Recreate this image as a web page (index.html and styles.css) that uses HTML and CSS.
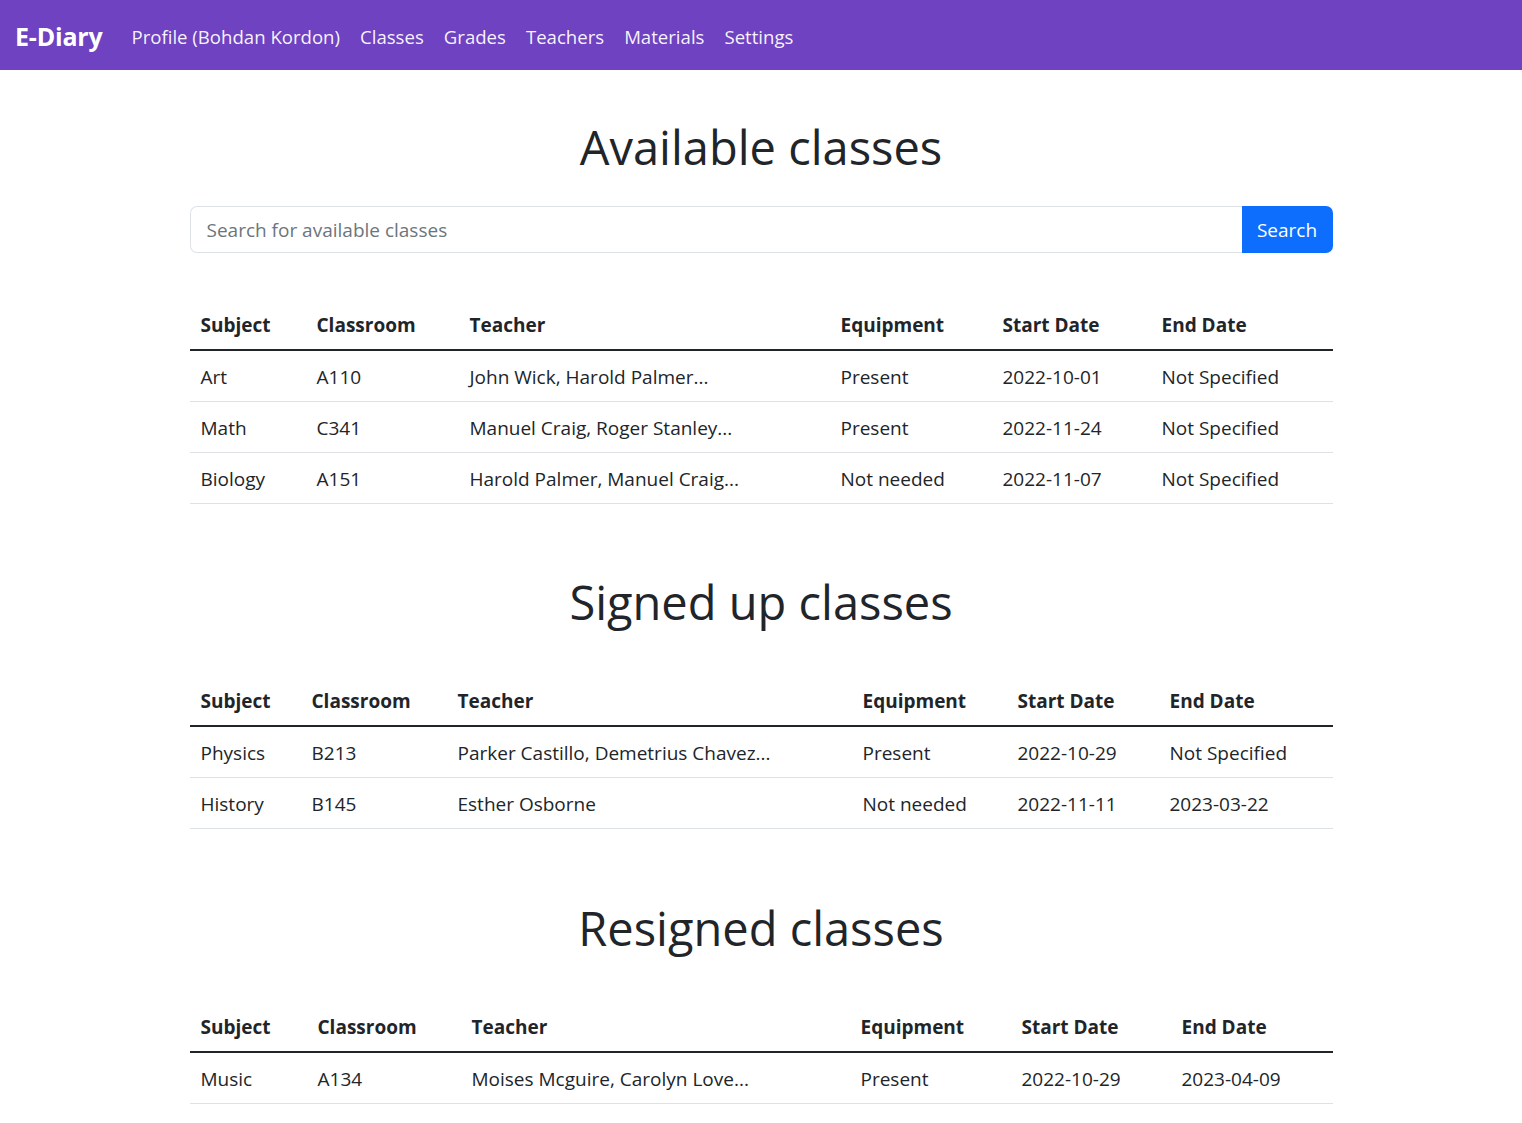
FILE: index.html
```html
<!DOCTYPE html>
<html lang="en">
<head>
<meta charset="utf-8">
<title>E-Diary</title>
<link rel="stylesheet" href="styles.css">
</head>
<body>
<nav class="navbar">
  <a class="brand" href="#">E-Diary</a>
  <ul class="nav">
    <li><a href="#">Profile (Bohdan Kordon)</a></li>
    <li><a href="#">Classes</a></li>
    <li><a href="#">Grades</a></li>
    <li><a href="#">Teachers</a></li>
    <li><a href="#">Materials</a></li>
    <li><a href="#">Settings</a></li>
  </ul>
</nav>
<main class="container">
  <h1 class="title first">Available classes</h1>
  <form class="search">
    <input class="search-input" type="text" placeholder="Search for available classes">
    <button class="search-btn" type="button">Search</button>
  </form>
  <table class="table t1">
    <colgroup><col class="c1"><col class="c2"><col class="c3"><col class="c4"><col class="c5"><col class="c6"></colgroup>
    <thead><tr><th>Subject</th><th>Classroom</th><th>Teacher</th><th>Equipment</th><th>Start Date</th><th>End Date</th></tr></thead>
    <tbody>
      <tr><td>Art</td><td>A110</td><td>John Wick, Harold Palmer...</td><td>Present</td><td>2022-10-01</td><td>Not Specified</td></tr>
      <tr><td>Math</td><td>C341</td><td>Manuel Craig, Roger Stanley...</td><td>Present</td><td>2022-11-24</td><td>Not Specified</td></tr>
      <tr><td>Biology</td><td>A151</td><td>Harold Palmer, Manuel Craig...</td><td>Not needed</td><td>2022-11-07</td><td>Not Specified</td></tr>
    </tbody>
  </table>

  <h1 class="title second">Signed up classes</h1>
  <table class="table t2">
    <colgroup><col class="c1"><col class="c2"><col class="c3"><col class="c4"><col class="c5"><col class="c6"></colgroup>
    <thead><tr><th>Subject</th><th>Classroom</th><th>Teacher</th><th>Equipment</th><th>Start Date</th><th>End Date</th></tr></thead>
    <tbody>
      <tr><td>Physics</td><td>B213</td><td>Parker Castillo, Demetrius Chavez...</td><td>Present</td><td>2022-10-29</td><td>Not Specified</td></tr>
      <tr><td>History</td><td>B145</td><td>Esther Osborne</td><td>Not needed</td><td>2022-11-11</td><td>2023-03-22</td></tr>
    </tbody>
  </table>

  <h1 class="title">Resigned classes</h1>
  <table class="table t3">
    <colgroup><col class="c1"><col class="c2"><col class="c3"><col class="c4"><col class="c5"><col class="c6"></colgroup>
    <thead><tr><th>Subject</th><th>Classroom</th><th>Teacher</th><th>Equipment</th><th>Start Date</th><th>End Date</th></tr></thead>
    <tbody>
      <tr><td>Music</td><td>A134</td><td>Moises Mcguire, Carolyn Love...</td><td>Present</td><td>2022-10-29</td><td>2023-04-09</td></tr>
    </tbody>
  </table>
</main>
</body>
</html>
```

FILE: styles.css
```css
* { box-sizing: border-box; }
html, body { margin: 0; padding: 0; }
body {
  font-family: "Open Sans", "Noto Sans", "Liberation Sans", sans-serif;
  font-size: 19px;
  line-height: 1.5;
  color: #212529;
  background: #fff;
}
a { text-decoration: none; }

.navbar {
  height: 70px;
  background: #6f42c1;
  display: flex;
  align-items: center;
  padding: 4px 15px 0;
}
.brand {
  color: #fff;
  font-size: 25px;
  font-weight: 700;
  margin-right: 19px;
  letter-spacing: -0.2px;
}
.nav {
  list-style: none;
  display: flex;
  margin: 0;
  padding: 0;
}
.nav a {
  display: block;
  padding: 8px 10px;
  color: rgba(255,255,255,0.95);
  font-size: 18.6px;
}

.container {
  width: 1143px;
  margin: 0 auto;
  padding-top: 47px;
  padding-bottom: 40px;
}

.title {
  font-size: 47px;
  font-weight: 400;
  line-height: 60px;
  text-align: center;
  margin: 69px 0 43px;
}
.title.first { margin: 0 0 29px; }
.title.second { margin-top: 68px; }

.search {
  display: flex;
  height: 47px;
  margin: 0 0 46px;
}
.search-input {
  flex: 1;
  min-width: 0;
  border: 1px solid #dee2e6;
  border-right: none;
  border-radius: 7px 0 0 7px;
  padding: 2px 15px 0 16px;
  font: inherit;
  font-size: 19px;
  color: #212529;
  outline: none;
}
.search-input::placeholder { color: #6c757d; }
.search-btn {
  width: 91px;
  border: none;
  background: #0d6efd;
  color: #fff;
  font: inherit;
  font-size: 19px;
  border-radius: 0 7px 7px 0;
  padding: 2px 0 0;
}

.table {
  width: 100%;
  border-collapse: collapse;
  table-layout: fixed;
}
.table th, .table td {
  text-align: left;
  padding: 11px 10px 9px 11px;
  line-height: 30px;
  white-space: nowrap;
  overflow: hidden;
}
.table th { font-weight: 700; }
.table thead tr { border-bottom: 2px solid #212529; }
.table tbody tr { border-bottom: 1px solid #dee2e6; }

.t1 .c1 { width: 116px; }
.t1 .c2 { width: 153px; }
.t1 .c3 { width: 371px; }
.t1 .c4 { width: 162px; }
.t1 .c5 { width: 159px; }
.t1 .c6 { width: 182px; }

.t2 .c1 { width: 111px; }
.t2 .c2 { width: 146px; }
.t2 .c3 { width: 405px; }
.t2 .c4 { width: 155px; }
.t2 .c5 { width: 152px; }
.t2 .c6 { width: 174px; }

.t3 .c1 { width: 117px; }
.t3 .c2 { width: 154px; }
.t3 .c3 { width: 389px; }
.t3 .c4 { width: 161px; }
.t3 .c5 { width: 160px; }
.t3 .c6 { width: 162px; }
```
